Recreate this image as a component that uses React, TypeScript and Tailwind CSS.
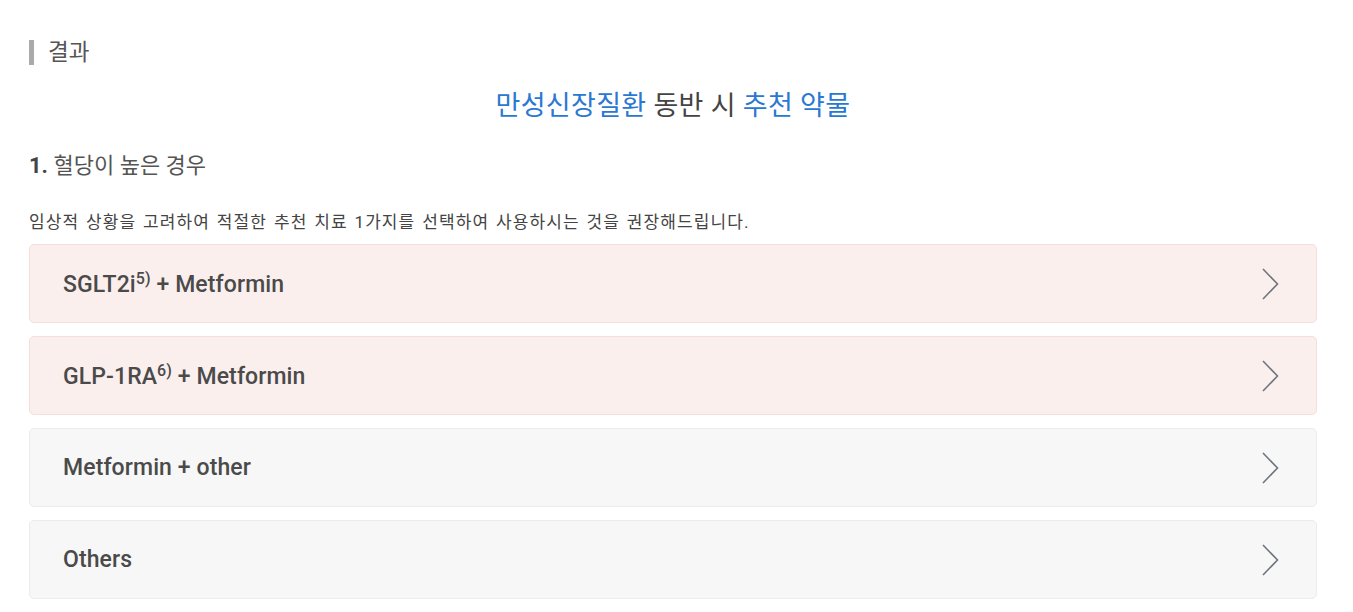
import type { ReactNode } from 'react'

type Option = {
  label: ReactNode
  tone: 'pink' | 'gray'
}

const OPTIONS: Option[] = [
  {
    label: (
      <>
        SGLT2i<span className="text-[16px] align-[8px]">5)</span> + Metformin
      </>
    ),
    tone: 'pink',
  },
  {
    label: (
      <>
        GLP-1RA<span className="text-[16px] align-[8px]">6)</span> + Metformin
      </>
    ),
    tone: 'pink',
  },
  { label: 'Metformin + other', tone: 'gray' },
  { label: 'Others', tone: 'gray' },
]

function Chevron() {
  return (
    <svg width="18" height="34" viewBox="0 0 18 34" fill="none" className="shrink-0">
      <path d="M2 2 L16.5 17 L2 32" stroke="#6f757c" strokeWidth="1.6" />
    </svg>
  )
}

function OptionRow({ option }: { option: Option }) {
  return (
    <button
      className={
        option.tone === 'pink'
          ? 'w-full h-[79px] flex items-center justify-between pl-[33px] pr-[37px] rounded-[5px] border border-[#f6dfdb] bg-[#fbefed] text-left'
          : 'w-full h-[79px] flex items-center justify-between pl-[33px] pr-[37px] rounded-[5px] border border-[#ececec] bg-[#f7f7f7] text-left'
      }
    >
      <span className="text-[23px] font-medium tracking-[0.1px] text-[#4a4a4a] leading-none">{option.label}</span>
      <Chevron />
    </button>
  )
}

export default function App() {
  return (
    <div
      className="min-h-screen bg-white pl-[29px] pr-[36px] pt-[39px] text-[#444]"
      style={{ fontFamily: 'Roboto, "Noto Sans CJK KR", sans-serif' }}
    >
      {/* Section header */}
      <div className="flex items-center gap-[14px] h-[26px]">
        <span className="w-[5px] h-[25px] bg-[#aaaaaa]" />
        <span className="text-[22.5px] text-[#555] leading-none">결과</span>
      </div>

      {/* Title */}
      <h1 className="mt-[28px] text-center text-[27px] tracking-[0.3px] leading-none text-[#444]">
        <span className="text-[#2a78d2]">만성신장질환</span> 동반 시{' '}
        <span className="text-[#2a78d2]">추천 약물</span>
      </h1>

      {/* Sub heading */}
      <h2 className="mt-[35px] text-[22px] leading-none text-[#555]">
        <span className="font-bold text-[#444]">1.</span> 혈당이 높은 경우
      </h2>

      <p className="mt-[37px] text-[17px] tracking-[1.1px] [word-spacing:1.5px] leading-none text-[#444]">
        임상적 상황을 고려하여 적절한 추천 치료 1가지를 선택하여 사용하시는 것을 권장해드립니다.
      </p>

      <div className="mt-[13px] flex flex-col gap-[13px]">
        {OPTIONS.map((o, i) => (
          <OptionRow key={i} option={o} />
        ))}
      </div>
    </div>
  )
}
